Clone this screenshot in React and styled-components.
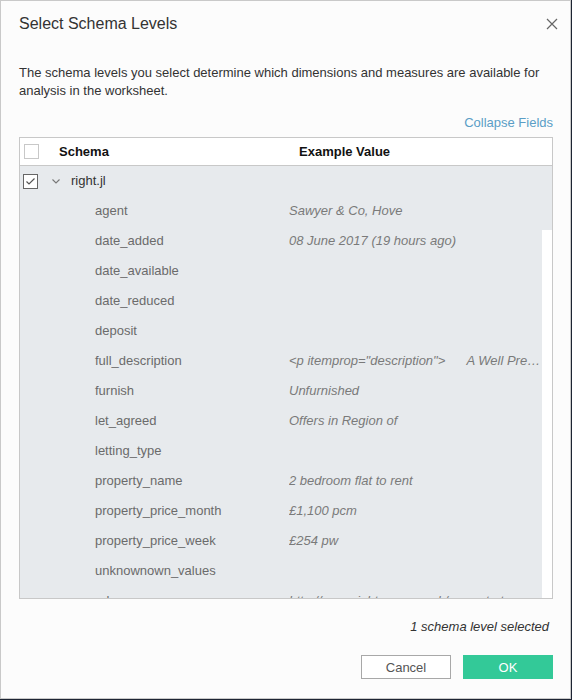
import React from "react";
import styled, { createGlobalStyle } from "styled-components";

const fields = [
  { name: "agent", value: "Sawyer & Co, Hove" },
  { name: "date_added", value: "08 June 2017 (19 hours ago)" },
  { name: "date_available", value: "" },
  { name: "date_reduced", value: "" },
  { name: "deposit", value: "" },
  {
    name: "full_description",
    value: '<p itemprop="description">      A Well Presented Two Bedroom Flat',
  },
  { name: "furnish", value: "Unfurnished" },
  { name: "let_agreed", value: "Offers in Region of" },
  { name: "letting_type", value: "" },
  { name: "property_name", value: "2 bedroom flat to rent" },
  { name: "property_price_month", value: "£1,100 pcm" },
  { name: "property_price_week", value: "£254 pw" },
  { name: "unknownown_values", value: "" },
  { name: "url", value: "http://www.rightmove.co.uk/property-to-rent/property-68035526.html" },
];

function CheckBox({ checked }) {
  return (
    <StyledCheck checked={checked}>
      {checked && (
        <svg width="11" height="9" viewBox="0 0 11 9">
          <polyline points="1.5,4.5 4,7 9.5,1.5" fill="none" stroke="#555" strokeWidth="1.2" />
        </svg>
      )}
    </StyledCheck>
  );
}

function App() {
  return (
    <>
      <GlobalStyle />
      <StyledDialog>
        <StyledHeader>
          <StyledTitle>Select Schema Levels</StyledTitle>
          <StyledClose aria-label="Close">
            <svg width="12" height="12" viewBox="0 0 12 12">
              <path d="M1 1 L11 11 M11 1 L1 11" stroke="#666" strokeWidth="1.2" />
            </svg>
          </StyledClose>
        </StyledHeader>
        <StyledDescription>
          The schema levels you select determine which dimensions and measures are available for
          analysis in the worksheet.
        </StyledDescription>
        <StyledLinkRow>
          <StyledLink>Collapse Fields</StyledLink>
        </StyledLinkRow>
        <StyledTable>
          <StyledHeadRow>
            <CheckBox />
            <StyledHeadCell width="240px">Schema</StyledHeadCell>
            <StyledHeadCell>Example Value</StyledHeadCell>
          </StyledHeadRow>
          <StyledBody>
            <StyledList>
              <StyledParentRow>
                <CheckBox checked />
                <StyledChevron width="8" height="5" viewBox="0 0 8 5">
                  <polyline points="0.5,0.5 4,4 7.5,0.5" fill="none" stroke="#777" strokeWidth="1.1" />
                </StyledChevron>
                <StyledParentName>right.jl</StyledParentName>
              </StyledParentRow>
              {fields.map((f) => (
                <StyledFieldRow key={f.name}>
                  <StyledFieldName>{f.name}</StyledFieldName>
                  <StyledFieldValue>{f.value}</StyledFieldValue>
                </StyledFieldRow>
              ))}
            </StyledList>
            <StyledScrollbar>
              <StyledThumb />
            </StyledScrollbar>
          </StyledBody>
        </StyledTable>
        <StyledStatus>1 schema level selected</StyledStatus>
        <StyledButtons>
          <StyledButton>Cancel</StyledButton>
          <StyledButton primary>OK</StyledButton>
        </StyledButtons>
      </StyledDialog>
    </>
  );
}

const GlobalStyle = createGlobalStyle`
  body {
    margin: 0;
    background: #1d2433;
    font-family: "Liberation Sans", Arial, sans-serif;
  }
`;

const StyledDialog = styled.div`
  width: 571px;
  height: 699px;
  box-sizing: border-box;
  border: 1px solid #c9c9c9;
  background: #fcfcfc;
  display: flex;
  flex-direction: column;
  padding: 0 17px 0 18px;
`;

const StyledHeader = styled.div`
  height: 44px;
  padding-top: 1px;
  box-sizing: border-box;
  display: flex;
  align-items: center;
  justify-content: space-between;
`;

const StyledTitle = styled.h2`
  margin: 0;
  font-size: 16px;
  font-weight: normal;
  color: #333;
`;

const StyledClose = styled.button`
  width: 12px;
  height: 12px;
  margin-right: -5px;
  padding: 0;
  border: none;
  background: none;
  display: flex;
`;

const StyledDescription = styled.p`
  margin: 19px 0 0;
  font-size: 13px;
  line-height: 18px;
  color: #333;
`;

const StyledLinkRow = styled.div`
  margin-top: 13px;
  text-align: right;
  line-height: 18px;
`;

const StyledLink = styled.span`
  font-size: 13px;
  color: #5a9ec6;
`;

const StyledTable = styled.div`
  margin-top: 5px;
  height: 462px;
  box-sizing: border-box;
  border: 1px solid #c8c8c8;
  display: flex;
  flex-direction: column;
`;

const StyledHeadRow = styled.div`
  height: 27px;
  flex: none;
  border-bottom: 1px solid #c8c8c8;
  background: #fff;
  display: flex;
  align-items: center;
  padding-left: 4px;
`;

const StyledHeadCell = styled.div`
  width: ${(p) => p.width || "auto"};
  font-size: 13px;
  font-weight: bold;
  color: #111;
  &:nth-child(2) {
    margin-left: 20px;
  }
`;

const StyledCheck = styled.span`
  width: 15px;
  height: 15px;
  box-sizing: border-box;
  flex: none;
  border: 1px solid ${(p) => (p.checked ? "#666" : "#c8c8c8")};
  background: #fff;
  display: flex;
  align-items: center;
  justify-content: center;
`;

const StyledBody = styled.div`
  flex: 1;
  display: flex;
  overflow: hidden;
  background: #e7eaed;
`;

const StyledList = styled.div`
  flex: 1;
  min-width: 0;
  overflow: hidden;
`;

const StyledScrollbar = styled.div`
  width: 10px;
  background: #fff;
`;

const StyledThumb = styled.div`
  height: 64px;
  background: #e7eaed;
`;

const StyledParentRow = styled.div`
  height: 30px;
  box-sizing: border-box;
  display: flex;
  align-items: center;
  padding-left: 3px;
`;

const StyledChevron = styled.svg`
  margin-left: 14px;
  flex: none;
`;

const StyledParentName = styled.span`
  margin-left: 11px;
  margin-bottom: 2px;
  font-size: 13px;
  color: #333;
`;

const StyledFieldRow = styled.div`
  height: 30px;
  box-sizing: border-box;
  display: flex;
  align-items: center;
  padding: 0 0 2px 75px;
  font-size: 13px;
`;

const StyledFieldName = styled.span`
  width: 194px;
  flex: none;
  color: #6b6b6b;
`;

const StyledFieldValue = styled.span`
  flex: 1;
  min-width: 0;
  overflow: hidden;
  white-space: pre;
  text-overflow: ellipsis;
  font-style: italic;
  color: #7a7a7a;
`;

const StyledStatus = styled.div`
  margin-top: 19px;
  padding-right: 4px;
  text-align: right;
  line-height: 18px;
  font-size: 13px;
  font-style: italic;
  color: #333;
`;

const StyledButtons = styled.div`
  margin-top: 19px;
  display: flex;
  justify-content: flex-end;
  gap: 12px;
`;

const StyledButton = styled.button`
  width: 90px;
  height: 24px;
  box-sizing: border-box;
  font-family: inherit;
  font-size: 13px;
  border: 1px solid ${(p) => (p.primary ? "#33c998" : "#a8a8a8")};
  background: ${(p) => (p.primary ? "#33c998" : "#fff")};
  color: ${(p) => (p.primary ? "#fff" : "#555")};
  padding: 0;
`;

export default App;
